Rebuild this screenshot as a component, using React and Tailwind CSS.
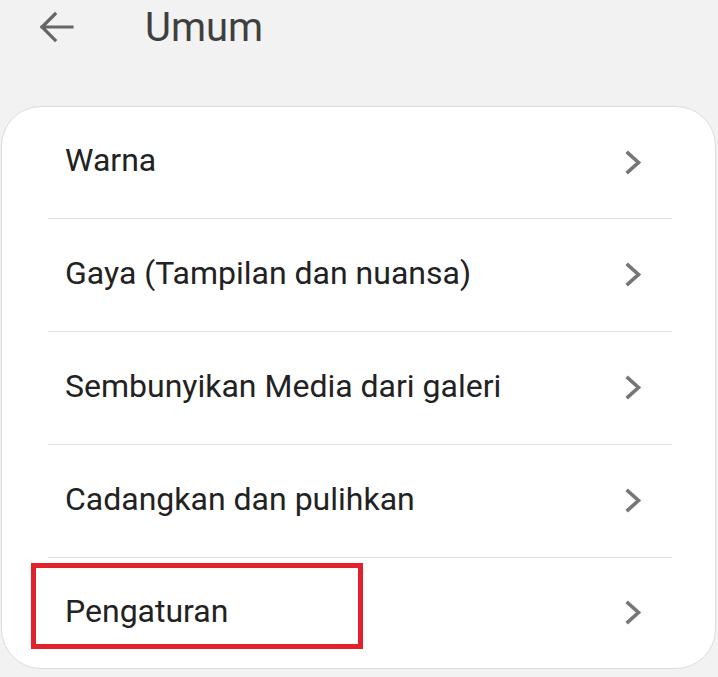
const items = [
  'Warna',
  'Gaya (Tampilan dan nuansa)',
  'Sembunyikan Media dari galeri',
  'Cadangkan dan pulihkan',
  'Pengaturan',
];

const rowHeights = ['h-[112px] border-b', 'h-[113px] border-b', 'h-[113px] border-b', 'h-[113px] border-b', 'h-[110px]'];

const Chevron = () => (
  <svg width="17" height="25" viewBox="0 0 17 25" fill="none" className="shrink-0">
    <path d="M3 3 L13.5 12.5 L3 22" stroke="#767676" strokeWidth="3.6" strokeLinecap="square" strokeLinejoin="miter" />
  </svg>
);

const Row = ({ label, sizing, highlight }) => (
  <div className={`relative flex items-center border-[#e0e0e0] ${sizing}`}>
    {highlight && (
      <div className="absolute left-[-17px] top-[5px] w-[332px] h-[86px] border-[5px] border-[#e3212d]" />
    )}
    <div className="flex-1 pl-[17px] pb-[5px]">
      <span className="text-[32px] text-[#222222]">{label}</span>
    </div>
    <div className="pr-[30px] pb-[1px]">
      <Chevron />
    </div>
  </div>
);

export default function App() {
  return (
    <div className="w-[718px] h-[677px] bg-[#f2f2f2] overflow-hidden" style={{ fontFamily: 'Roboto, "Noto Sans", sans-serif' }}>
      <div className="h-[106px] flex items-start pt-[5px]">
        <div className="w-[145px] flex pl-[38px] pt-[5px]">
          <svg width="36" height="34" viewBox="0 0 36 34" fill="none">
            <path d="M34 17 H4 M17 4 L4 17 L17 30" stroke="#666666" strokeWidth="3.2" strokeLinecap="square" />
          </svg>
        </div>
        <h1 className="text-[40px] leading-[46px] text-[#3f3f3f]">Umum</h1>
      </div>
      <div className="ml-[1px] mr-[2px] bg-white border border-[#dcdcdc] rounded-[40px] pl-[46px] pr-[43px]">
        {items.map((label, i) => (
          <Row key={label} label={label} sizing={rowHeights[i]} highlight={label === 'Pengaturan'} />
        ))}
      </div>
    </div>
  );
}
